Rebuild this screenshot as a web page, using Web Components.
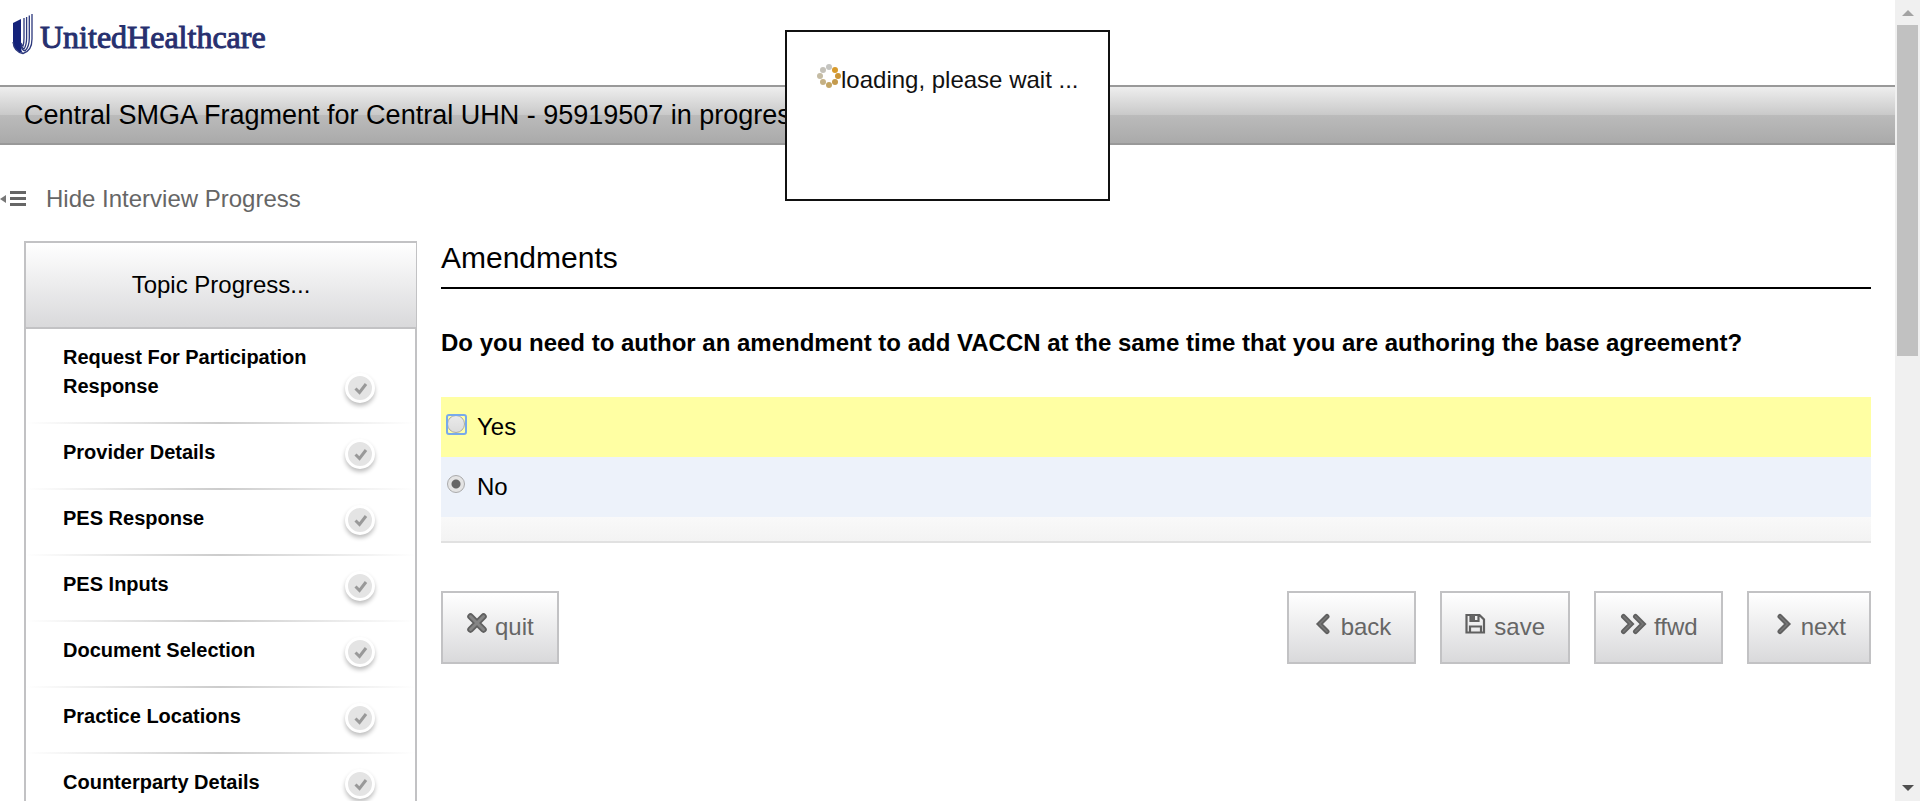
<!DOCTYPE html>
<html lang="en"><head><meta charset="utf-8"><title>Interview</title>
<style>
html,body{margin:0;height:100%;background:#fff}
body{font-family:"Liberation Sans",Arial,sans-serif;font-size:24px;color:#000;overflow:hidden}
</style></head><body>
<interview-page></interview-page>
<script>
const define=(name,html,setup)=>customElements.define(name,class extends HTMLElement{
  connectedCallback(){
    if(this.shadowRoot)return;
    const t=document.createElement('template');
    t.innerHTML=html;
    this.attachShadow({mode:'open'}).append(t.content.cloneNode(true));
    if(setup)setup(this,this.shadowRoot);
  }
});

define('brand-logo',`<style>
:host{display:flex;align-items:center;gap:6px;height:85px;box-sizing:border-box;padding:0 0 17px 12px}
svg{display:block;flex:none}
span{padding-top:6px;font:32px/40px "Liberation Serif",serif;color:#27306f;-webkit-text-stroke:1px #27306f}
</style>
<svg width="22" height="44" viewBox="0 0 22 44" aria-hidden="true">
<path d="M1 11L9 7V35Q9 39 11 41Q1 39 1 30Z" fill="#14227a"/>
<g fill="none" stroke="#2c387c" stroke-width="1.3"><path d="M1 30Q2 40 11 41.500Q20 39 20 27V2"/><path d="M9 34Q10 38 13 39Q17.300 35 17.300 26V3.500"/><path d="M9 33Q10 36 12 37Q14.600 33 14.600 26V5"/><path d="M9 31Q10 34 11 34Q12 31 12 26V6"/></g>
</svg><span>UnitedHealthcare</span>`);

define('title-bar',`<style>
:host{display:flex;align-items:center;height:60px;box-sizing:border-box;padding:0 24px;border:solid #999;border-width:2px 0;
background:linear-gradient(#eee,#c9c9c9 50%,#bbb 50%,#aaa)}
h1{margin:0;font-size:27px;line-height:32px;font-weight:400;white-space:nowrap}
</style><h1><slot></slot></h1>`);

define('progress-toggle',`<style>
:host{display:block;padding:38px 0 0}
a{display:flex;align-items:center;gap:20px;height:32px;color:#666;text-decoration:none;line-height:32px}
svg{display:block}
</style><a href="#"><svg width="26" height="20" viewBox="0 0 26 20"><path d="M0 10l6-4v8z" fill="#777"/><path d="M10 3.500h16M10 9.500h16M10 15.500h16" stroke="#666" stroke-width="3"/></svg><slot></slot></a>`);

define('topic-item',`<style>
:host{display:flex;align-items:flex-end;justify-content:space-between;min-height:66px;box-sizing:border-box;padding:14px 40px 23px 37px;font-size:20px;line-height:29px;font-weight:700;
background:linear-gradient(90deg,#fff,#ccc 50%,#fff) bottom/100% 2px no-repeat}
span{max-width:250px}
i{flex:none;width:24px;height:24px;margin-bottom:-2px;border:3px solid #fff;border-radius:50%;background:#e4e4e4;box-shadow:0 3px 4px rgba(0,0,0,.25)}
svg{display:block}
</style><span><slot></slot></span><i><svg width="24" height="24" viewBox="0 0 24 24"><path d="M7.500 12.500l4 4l6.500-8.500" fill="none" stroke="#999" stroke-width="3"/></svg></i>`);

define('topic-progress',`<style>
:host{display:block;border:solid #c2c2c4;border-width:2px 0 0 2px}
h2{margin:0;height:86px;box-sizing:border-box;border:solid #c2c2c4;border-width:0 1px 2px 0;text-align:center;font-size:24px;line-height:84px;font-weight:400;background:linear-gradient(#fff,#d9d9db)}
div{border-right:2px solid #c2c2c4}
</style><h2>Topic Progress...</h2><div><slot></slot></div>`);

define('answer-choices',`<style>
:host{display:block;border-bottom:2px solid #e1e1e1;background:#f5f5f5}
label{display:flex;align-items:flex-start;gap:11px;height:60px;box-sizing:border-box;padding:18px 6px 0;background:#edf2fa;line-height:24px}
label.on{background:#ffffa3}
i{display:block;flex:none;width:19px;height:19px}
input{display:block;appearance:none;box-sizing:border-box;width:18px;height:18px;margin:0;border:1px solid #aaa;border-radius:50%;background:linear-gradient(#eaeaea,#dcdcdc)}
input:checked{background:radial-gradient(circle,#666 4px,#e4e4e4 5px)}
.on i{outline:2px solid #78aaeb;outline-offset:-1px;border-radius:2px}
.foot{height:24px;background:linear-gradient(#f9f9f9,#f3f3f3)}
</style>
<label class="on"><i><input type="radio" name="a"></i><span>Yes</span></label>
<label><i><input type="radio" name="a" checked></i><span>No</span></label><div class="foot"></div>`);

const chevron=(d)=>`<path d="${d}" stroke-width="5"/><path d="${d}" stroke="#777" stroke-width="1.500"/>`;
const icons={
quit:'<path d="M4.500 5.500l13 13M17.500 5.500l-13 13" stroke-width="6.500"/><path d="M4.500 5.500l13 13M17.500 5.500l-13 13" stroke="#858585" stroke-width="3"/>',
back:chevron('M15 5.500l-7.500 7.500l7.500 7.500'),
next:chevron('M8 5.500l7.500 7.500l-7.500 7.500'),
ffwd:chevron('M4.500 5.500l7.500 7.500l-7.500 7.500M16.500 5.500l7.500 7.500l-7.500 7.500'),
save:'<path d="M1.500 4h13l4.500 4.500v13H1.500z M5.500 4v6h8V4 M5 21.500v-6h11v6" stroke-width="2.200"/><path d="M6 4h4v5H6z" fill="#666" stroke="none"/>'};
define('nav-button',`<style>
:host{display:block}
button{display:flex;gap:7px;height:73px;box-sizing:border-box;margin:0;padding:18px 23px 0;border:2px solid #c2c2c4;background:linear-gradient(#fff,#d9d9db);font:24px/32px "Liberation Sans",Arial,sans-serif;color:#666}
svg{display:block;flex:none}
</style><button type="button"><svg height="24" fill="none" stroke="#606060" stroke-linecap="round" stroke-linejoin="miter"></svg><slot></slot></button>`,(h,r)=>{
 const s=r.querySelector('svg'),w=h.getAttribute('icon')==='ffwd'?28:22;
 s.setAttribute('width',w);s.setAttribute('viewBox','0 0 '+w+' 24');s.innerHTML=icons[h.getAttribute('icon')];
});

define('question-panel',`<style>
:host{display:block}
h2{margin:0;height:48px;box-sizing:border-box;border-bottom:2px solid #000;font-size:30px;line-height:34px;font-weight:400}
p{margin:38px 0;font-weight:700;line-height:32px}
nav{display:flex;gap:24px;margin-top:48px}
nav :first-child{margin-right:auto}
</style><h2>Amendments</h2>
<p>Do you need to author an amendment to add VACCN at the same time that you are authoring the base agreement?</p>
<answer-choices></answer-choices>
<nav><nav-button icon="quit">quit</nav-button><nav-button icon="back">back</nav-button><nav-button icon="save">save</nav-button><nav-button icon="ffwd">ffwd</nav-button><nav-button icon="next">next</nav-button></nav>`);

define('loading-box',`<style>
:host{display:flex;align-items:flex-start;position:absolute;z-index:2;top:30px;left:785px;width:325px;height:171px;box-sizing:border-box;border:2px solid #111;background:#fff;padding:32px 30px;color:#111}
svg{display:block;flex:none}
span{line-height:32px;white-space:nowrap}
</style><svg width="24" height="24" viewBox="0 0 24 24"><circle cx="12" cy="3" r="3" fill="#c4c4c0"/><circle cx="18" cy="6" r="3" fill="#d89a2b"/><circle cx="21" cy="12" r="3" fill="#cc9535"/><circle cx="18" cy="18" r="3" fill="#c49a4c"/><circle cx="12" cy="21" r="3" fill="#c3a565"/><circle cx="6" cy="18" r="3" fill="#c5b185"/><circle cx="3" cy="12" r="3" fill="#c5bca4"/><circle cx="6" cy="6" r="3" fill="#c4c1b8"/></svg><span>loading, please wait ...</span>`);

define('scroll-track',`<style>
:host{display:flex;flex-direction:column;align-items:center;background:#f0f0f0;height:100%;box-sizing:border-box;padding:10px 0}
svg{display:block;flex:none}
div{width:21px;height:331px;margin:9px 0 auto;background:#c1c1c1}
</style><svg width="12" height="6"><path d="M0 6l6-6l6 6z" fill="#a3a3a3"/></svg><div></div><svg width="12" height="6"><path d="M0 0l6 6l6-6z" fill="#505050"/></svg>`);

define('interview-page',`<style>
:host{display:grid;grid-template-columns:minmax(0,1fr) 25px;height:100vh;overflow:hidden;position:relative}
.view{overflow:hidden}
.cols{display:grid;grid-template-columns:393px minmax(0,1fr);gap:24px;padding:26px 24px 0;align-items:start}
</style>
<div class="view"><brand-logo></brand-logo>
<title-bar>Central SMGA Fragment for Central UHN - 95919507 in progress</title-bar>
<progress-toggle>Hide Interview Progress</progress-toggle>
<div class="cols"><topic-progress>
<topic-item>Request For Participation Response</topic-item><topic-item>Provider Details</topic-item><topic-item>PES Response</topic-item><topic-item>PES Inputs</topic-item><topic-item>Document Selection</topic-item><topic-item>Practice Locations</topic-item><topic-item>Counterparty Details</topic-item>
</topic-progress><question-panel></question-panel></div></div>
<scroll-track></scroll-track><loading-box></loading-box>`);
</script></body></html>
